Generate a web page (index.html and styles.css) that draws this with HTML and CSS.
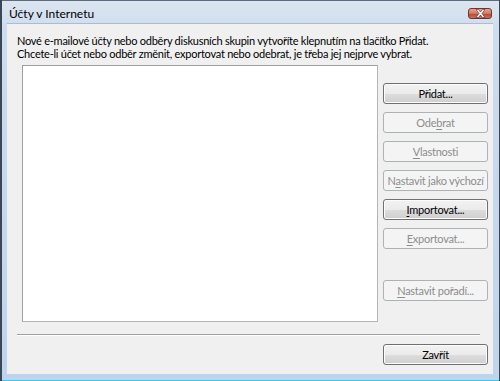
FILE: index.html
```html
<!DOCTYPE html>
<html lang="cs">
<head>
<meta charset="utf-8">
<title>Účty v Internetu</title>
<link rel="stylesheet" href="styles.css">
</head>
<body>
<div class="window">
  <div class="titlebar">
    <span class="title">Účty v Internetu</span>
    <button class="close" aria-label="Zavřít">
      <svg width="11" height="9" viewBox="0 0 11 9"><path d="M1 0.5 L3.5 0.5 L5.5 3 L7.5 0.5 L10 0.5 L7 4.5 L10 8.5 L7.5 8.5 L5.5 6 L3.5 8.5 L1 8.5 L4 4.5 Z" fill="#fff" stroke="#5a2020" stroke-width="0.6"/></svg>
    </button>
  </div>
  <div class="client">
    <p class="intro">Nové e-mailové účty nebo odběry diskusních skupin vytvoříte klepnutím na tlačítko Přidat.<br>Chcete-li účet nebo odběr změnit, exportovat nebo odebrat, je třeba jej nejprve vybrat.</p>
    <div class="main">
      <div class="listbox"></div>
      <div class="buttons">
        <button class="btn">Přidat...</button>
        <button class="btn" disabled>Ode<u>b</u>rat</button>
        <button class="btn" disabled><u>V</u>lastnosti</button>
        <button class="btn" disabled>N<u>a</u>stavit jako výchozí</button>
        <button class="btn"><u>I</u>mportovat...</button>
        <button class="btn" disabled><u>E</u>xportovat...</button>
        <button class="btn btn-order" disabled><u>N</u>astavit pořadí...</button>
      </div>
    </div>
    <div class="separator"></div>
    <div class="footer">
      <button class="btn">Zavřít</button>
    </div>
  </div>
  <div class="bottom-frame"></div>
</div>
</body>
</html>
```

FILE: styles.css
```css
html, body {
  margin: 0;
  padding: 0;
  width: 500px;
  height: 381px;
  overflow: hidden;
  background: #bcd3ec;
}

.window {
  width: 500px;
  height: 381px;
  box-sizing: border-box;
  display: flex;
  flex-direction: column;
  border-left: 2px solid #3b4656;
  border-right: 1px solid #3b4656;
  background: linear-gradient(#dde6f0, #cddcee 30px, #bfd4ec);
  font-family: "Lato", "Open Sans", sans-serif;
  font-size: 11px;
  letter-spacing: -0.25px;
  color: #000;
}

.titlebar {
  height: 23px;
  flex: none;
  display: flex;
  align-items: center;
  justify-content: space-between;
  padding: 0 7px 0 7px;
  border-top: 1px solid #5b6c80;
  box-sizing: border-box;
}

.title {
  font-size: 12px;
  letter-spacing: 0;
  color: #000;
  padding-top: 2px;
}

.close {
  width: 24px;
  height: 11px;
  margin-top: 2px;
  padding: 0;
  border: 1px solid #6b3535;
  border-radius: 3px;
  background: linear-gradient(#e8a493, #d0775f 50%, #b8452d 51%, #cc6f55);
  display: flex;
  align-items: center;
  justify-content: center;
}

.close svg {
  display: block;
}

.client {
  flex: none;
  width: 486px;
  height: 351px;
  margin-left: 5px;
  background: #f0f0f0;
  box-sizing: border-box;
  padding: 10px 5px 0 10px;
  display: flex;
  flex-direction: column;
  border-top: 1px solid #a9bcd3;
}

.intro {
  margin: 0;
  line-height: 13px;
  white-space: nowrap;
}

.main {
  display: flex;
  margin-top: 5px;
  gap: 5px;
}

.listbox {
  width: 357px;
  height: 257px;
  margin-left: 5px;
  box-sizing: border-box;
  background: #fff;
  border: 1px solid #a0a0a0;
  border-right-color: #b4b4b4;
  border-bottom-color: #b4b4b4;
}

.buttons {
  display: flex;
  flex-direction: column;
  gap: 8px;
  padding-top: 18px;
}

.btn {
  width: 105px;
  height: 21px;
  padding: 0 0 1px 0;
  box-sizing: border-box;
  font-family: inherit;
  font-size: 11px;
  letter-spacing: -0.25px;
  color: #000;
  border: 1px solid #707070;
  border-radius: 3px;
  background: linear-gradient(#f2f2f2, #ebebeb 50%, #dddddd 51%, #cfcfcf);
  box-shadow: inset 0 0 0 1px #fcfcfc;
  white-space: nowrap;
}

.btn:disabled {
  color: #8d8d8d;
  border-color: #adb2b5;
  background: #f4f4f4;
  box-shadow: none;
}

.btn u {
  text-decoration-thickness: 1px;
  text-underline-offset: 2px;
}

.btn-order {
  margin-top: 23px;
}

.separator {
  width: 463px;
  height: 0;
  margin-top: 12px;
  border-top: 1px solid #a0a0a0;
  border-bottom: 1px solid #ffffff;
}

.footer {
  display: flex;
  justify-content: flex-end;
  padding-top: 8px;
  padding-right: 0;
}

.bottom-frame {
  flex: none;
  height: 6px;
  border-bottom: 1px solid #38c8ec;
}
```
